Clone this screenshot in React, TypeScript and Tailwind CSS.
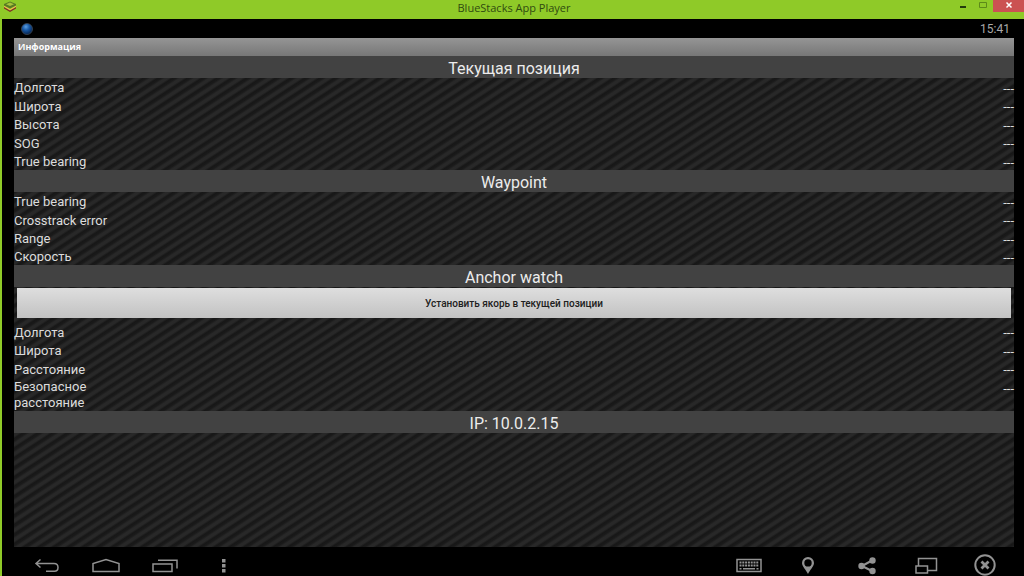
import type { ReactNode } from "react";

function SectionTitle({ children }: { children: ReactNode }) {
  return (
    <h2 className="h-[22px] bg-[#424242] text-center text-base leading-[26px] text-[#ececec]">{children}</h2>
  );
}

function Readings({ label, rows, className }: { label: string; rows: string[]; className: string }) {
  return (
    <table aria-label={label} className={`w-full border-collapse text-[13px] text-[#dcdcdc] ${className}`}>
      <tbody>
        {rows.map((row) => (
          <tr key={row} className="align-bottom">
            <th scope="row" className="w-28 p-0 text-left leading-4 font-normal">
              <span className="block w-26">{row}</span>
            </th>
            <td className="p-0 text-right align-top leading-[22px]">
              <span className="block h-[18px]">---</span>
            </td>
          </tr>
        ))}
      </tbody>
    </table>
  );
}

function IconButton({ label, children }: { label: string; children: ReactNode }) {
  return (
    <button type="button" aria-label={label} className="flex h-6 w-[59px] items-center justify-center text-[#929292]">
      {children}
    </button>
  );
}

export default function App() {
  return (
    <div className="flex h-screen flex-col overflow-hidden bg-black font-['Roboto',sans-serif]">
      <header className="grid h-[19px] shrink-0 grid-cols-[1fr_auto_1fr] bg-[#8fca28] pl-1">
        <svg className="mt-px h-3 w-3" viewBox="0 0 12 12" aria-hidden="true">
          <path d="M0 5.500 6 9l6-3.500v2L6 11 0 7.500z" fill="#7d3222" />
          <path d="M0 4.500 6 8l6-3.500v1.500L6 9.500 0 6z" fill="#e9bd4b" />
          <path d="M0 3 6 .5 12 3v1.500L6 7.500 0 4.500z" fill="#587b24" />
          <path d="M2 3.200 6 1.500l4 1.700L6 5z" fill="#a6c53c" />
        </svg>
        <h1 className="font-['Open_Sans',sans-serif] text-[11px] leading-4 text-[#2f4a10]">BlueStacks App Player</h1>
        <div className="flex items-start justify-end">
          <button type="button" aria-label="Minimize" className="flex h-3 w-5 justify-center">
            <svg className="h-3 w-2" viewBox="0 0 8 12"><path d="M1 6h6v2H1z" fill="#243b0c" /></svg>
          </button>
          <button type="button" aria-label="Maximize" className="flex h-3 w-5 justify-center">
            <svg className="h-3 w-2" viewBox="0 0 8 12"><path d="M.5 2.500h7v5h-7z" fill="none" stroke="#5d8a19" /></svg>
          </button>
          <button type="button" aria-label="Close" className="flex h-3 w-[31px] justify-center bg-[#cb5252]">
            <svg className="h-3 w-2" viewBox="0 0 8 12"><path d="m1.500 2.500 5 5m0-5-5 5" stroke="#fff" strokeWidth="1.500" /></svg>
          </button>
        </div>
      </header>

      <div className="flex min-h-0 flex-1 flex-col border-l-2 border-[#8fca28]">
        <div className="flex h-[19px] shrink-0 items-center justify-between pr-[14px] pl-[19px]">
          <svg className="h-3 w-3" viewBox="0 0 12 12" aria-hidden="true">
            <defs>
              <radialGradient id="globe" cx="40%" cy="30%" r="70%">
                <stop offset="0" stopColor="#5c9ee0" />
                <stop offset=".45" stopColor="#1859a6" />
                <stop offset="1" stopColor="#06234f" />
              </radialGradient>
            </defs>
            <circle cx="6" cy="6" r="5.500" fill="url(#globe)" stroke="#49525c" strokeWidth=".7" />
          </svg>
          <time className="text-xs leading-4 text-[#a8a8a8]">15:41</time>
        </div>

        <main className="mr-[10px] ml-3 min-h-0 flex-1 bg-[repeating-linear-gradient(147deg,#171717_0px,#1a1a1a_2px,#282828_4px,#282828_6px,#171717_8px)]">
          <div className="h-[18px] bg-linear-to-b from-[#959595] to-[#777777] pl-1 font-['Open_Sans',sans-serif] text-[9px] leading-[18px] font-bold text-white">
            Информация
          </div>
          <section>
            <SectionTitle>Текущая позиция</SectionTitle>
            <Readings label="Текущая позиция" rows={["Долгота", "Широта", "Высота", "SOG", "True bearing"]} className="h-[92px]" />
          </section>
          <section>
            <SectionTitle>Waypoint</SectionTitle>
            <Readings label="Waypoint" rows={["True bearing", "Crosstrack error", "Range", "Скорость"]} className="h-[73px]" />
          </section>
          <section>
            <SectionTitle>Anchor watch</SectionTitle>
            <div className="flex px-[3px] pt-px pb-1">
              <button type="button" className="h-[30px] flex-1 bg-linear-to-b from-[#dedede] to-[#c2c2c2] text-[10px] font-medium text-[#202020]">
                Установить якорь в текущей позиции
              </button>
            </div>
            <Readings label="Anchor watch" rows={["Долгота", "Широта", "Расстояние", "Безопасное расстояние"]} className="h-[89px]" />
          </section>
          <SectionTitle>IP: 10.0.2.15</SectionTitle>
        </main>

        <nav aria-label="Панель навигации" className="flex h-[29px] shrink-0 items-start justify-between overflow-hidden pt-[7px] pr-[10px] pl-[15px]">
          <div className="flex">
            <IconButton label="Назад">
              <svg className="h-4 w-7" viewBox="0 0 28 16" fill="none" stroke="currentColor" strokeWidth="1.500">
                <path d="M7.500 1.500 3 5.500l4.500 4M3 5.500h18q4 0 4 4T21 13.200h-8" />
              </svg>
            </IconButton>
            <IconButton label="Домой">
              <svg className="h-4 w-7" viewBox="0 0 28 16" fill="none" stroke="currentColor" strokeWidth="1.500">
                <path d="M1 13.500V5.500l13-4 13 4v8z" />
              </svg>
            </IconButton>
            <IconButton label="Недавние">
              <svg className="h-4 w-7" viewBox="0 0 28 16" fill="none" stroke="currentColor" strokeWidth="1.500">
                <path d="M2 6h19v7.500H2zM7 2.200h19v8.300" />
              </svg>
            </IconButton>
            <IconButton label="Меню">
              <svg className="h-4 w-7" viewBox="0 0 28 16" fill="currentColor">
                <path d="M12 1h3.500v3.500H12zM12 6h3.500v3.500H12zM12 11h3.500v3.500H12z" />
              </svg>
            </IconButton>
          </div>
          <div className="flex">
            <IconButton label="Клавиатура">
              <svg className="h-4 w-7" viewBox="0 0 28 16" fill="none" stroke="currentColor">
                <path d="M2 1.500h24v12H2z" strokeWidth="1.500" />
                <path d="M4.500 4.500h19M4.500 7.500h19" strokeWidth="2" strokeDasharray="2 .8" />
                <path d="M4.500 10.800h2m1.500 0h12m1.500 0h2" strokeWidth="1.500" />
              </svg>
            </IconButton>
            <IconButton label="Местоположение">
              <svg className="h-[18px] w-4" viewBox="0 0 16 18" fill="currentColor" fillRule="evenodd">
                <path d="M8 0a6 6 0 0 0-6 6c0 3.500 4 6.500 6 11 2-4.500 6-7.500 6-11a6 6 0 0 0-6-6zm0 2.200a3.700 3.700 0 1 1 0 7.400 3.700 3.700 0 0 1 0-7.400z" />
              </svg>
            </IconButton>
            <IconButton label="Поделиться">
              <svg className="h-[18px] w-5" viewBox="0 0 20 18" fill="currentColor">
                <path d="M5 9 15 3.500M5 9l10 5" stroke="currentColor" strokeWidth="2" />
                <circle cx="4.500" cy="9" r="3.200" />
                <circle cx="15.500" cy="3.500" r="3.200" />
                <circle cx="15.500" cy="14" r="3.200" />
              </svg>
            </IconButton>
            <IconButton label="Размер окна">
              <svg className="h-[18px] w-6" viewBox="0 0 24 18" fill="none" stroke="currentColor" strokeWidth="1.500">
                <path d="M4.500 9V1.500h18v12h-9M2 9h11.500v7H2z" />
              </svg>
            </IconButton>
            <IconButton label="Закрыть">
              <svg className="h-6 w-6" viewBox="0 0 24 24" fill="none" stroke="currentColor">
                <circle cx="12" cy="11" r="9.700" strokeWidth="2" />
                <path d="m8.500 7.500 7 7m0-7-7 7" strokeWidth="2.800" />
              </svg>
            </IconButton>
          </div>
        </nav>
      </div>
    </div>
  );
}
